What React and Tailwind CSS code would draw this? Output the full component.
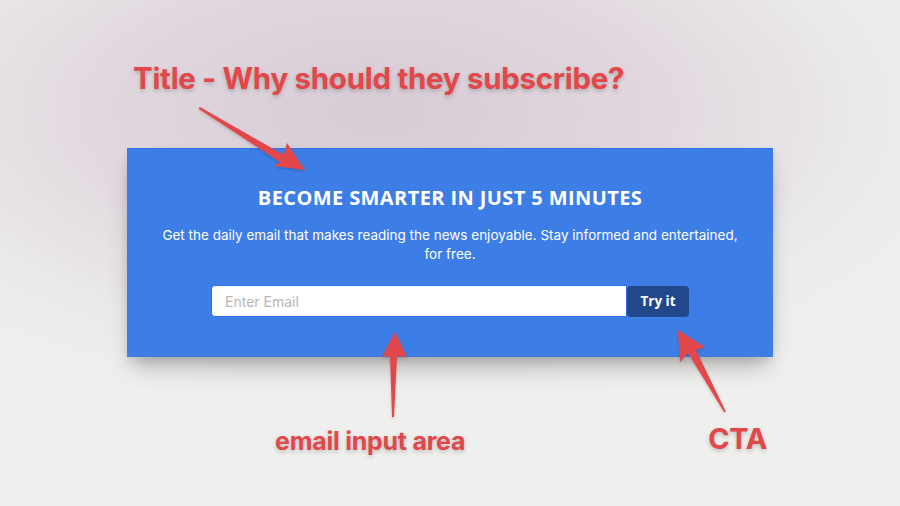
import React from "react";

// Annotated newsletter signup card: callout labels, arrows, and the card itself.
function Arrows() {
  return (
    <svg
      className="absolute inset-0 pointer-events-none"
      width="900"
      height="506"
      viewBox="0 0 900 506"
    >
      <defs>
        <filter id="arrowShadow" x="-20%" y="-20%" width="140%" height="140%">
          <feDropShadow dx="0" dy="1.5" stdDeviation="1.5" floodColor="#000" floodOpacity="0.18" />
        </filter>
      </defs>
      <g fill="#e2474a" filter="url(#arrowShadow)">
        {/* arrow pointing at the card heading */}
        <polygon points="199,107 201,109 283,158 287,143 305,170 274,166 280,162 199,109" />
        <polygon points="200,107 284,155 282,161 199,109" />
        {/* arrow pointing up at the email field */}
        <polygon points="395,332 407,357 397,356 394,417 392,417 390,356 382,357" />
        {/* arrow pointing up at the button */}
        <polygon points="678,330 705,347 696,350 726,412 724,412 688,353 680,362" />
      </g>
    </svg>
  );
}

export default function App() {
  const label =
    "font-bold text-[#e2474a] [text-shadow:0_2px_4px_rgba(0,0,0,0.22)] tracking-[-0.01em]";
  return (
    <div
      className="relative w-[900px] h-[506px] overflow-hidden bg-[radial-gradient(ellipse_70%_60%_at_42%_22%,#d7cbd5_0%,#e1d8df_45%,#ecebea_80%,#efefee_100%)]"
      style={{ fontFamily: "Inter, 'Liberation Sans', sans-serif" }}
    >
      <div className="flex flex-col">
        <div className={`pl-[133px] pt-[60px] text-[29.5px] leading-[36px] ${label}`}>
          Title - Why should they subscribe?
        </div>

        <div className="ml-[127px] mt-[52px] w-[646px] h-[209px] bg-[#3d7de6] border-t border-[#2f73e8] shadow-[0_14px_22px_-6px_rgba(0,0,0,0.28),0_4px_8px_rgba(0,0,0,0.08)] flex flex-col items-center">
          <h2
            className="mt-[35px] text-[20px] leading-[28px] font-bold text-white tracking-[0.02em]"
            style={{ fontFamily: "'Open Sans', Inter, sans-serif" }}
          >
            BECOME SMARTER IN JUST 5 MINUTES
          </h2>
          <p className="mt-[14px] w-[592px] text-center text-[13.5px] leading-[19px] text-white">
            Get the daily email that makes reading the news enjoyable. Stay informed and entertained,
            for free.
          </p>
          <div className="mt-[21px] flex items-stretch">
            <input
              type="email"
              placeholder="Enter Email"
              className="w-[416px] h-[32px] rounded-l-[4px] border border-[#2d6fe6] bg-white pl-[13px] text-[14px] text-gray-700 placeholder:text-[#b5b5b8] outline-none"
            />
            <button
              className="w-[62px] h-[31px] mt-[1px] rounded-[4px] bg-[#22478a] text-[13.5px] font-bold text-white"
              style={{ fontFamily: "'Open Sans', Inter, sans-serif" }}
            >
              Try it
            </button>
          </div>
        </div>

        <div className="flex items-start mt-[69px]">
          <div className={`ml-[275px] text-[25px] leading-[30px] ${label}`}>email input area</div>
          <div className={`ml-[243px] -mt-[4px] text-[29px] leading-[34px] ${label}`}>CTA</div>
        </div>
      </div>
      <Arrows />
    </div>
  );
}
